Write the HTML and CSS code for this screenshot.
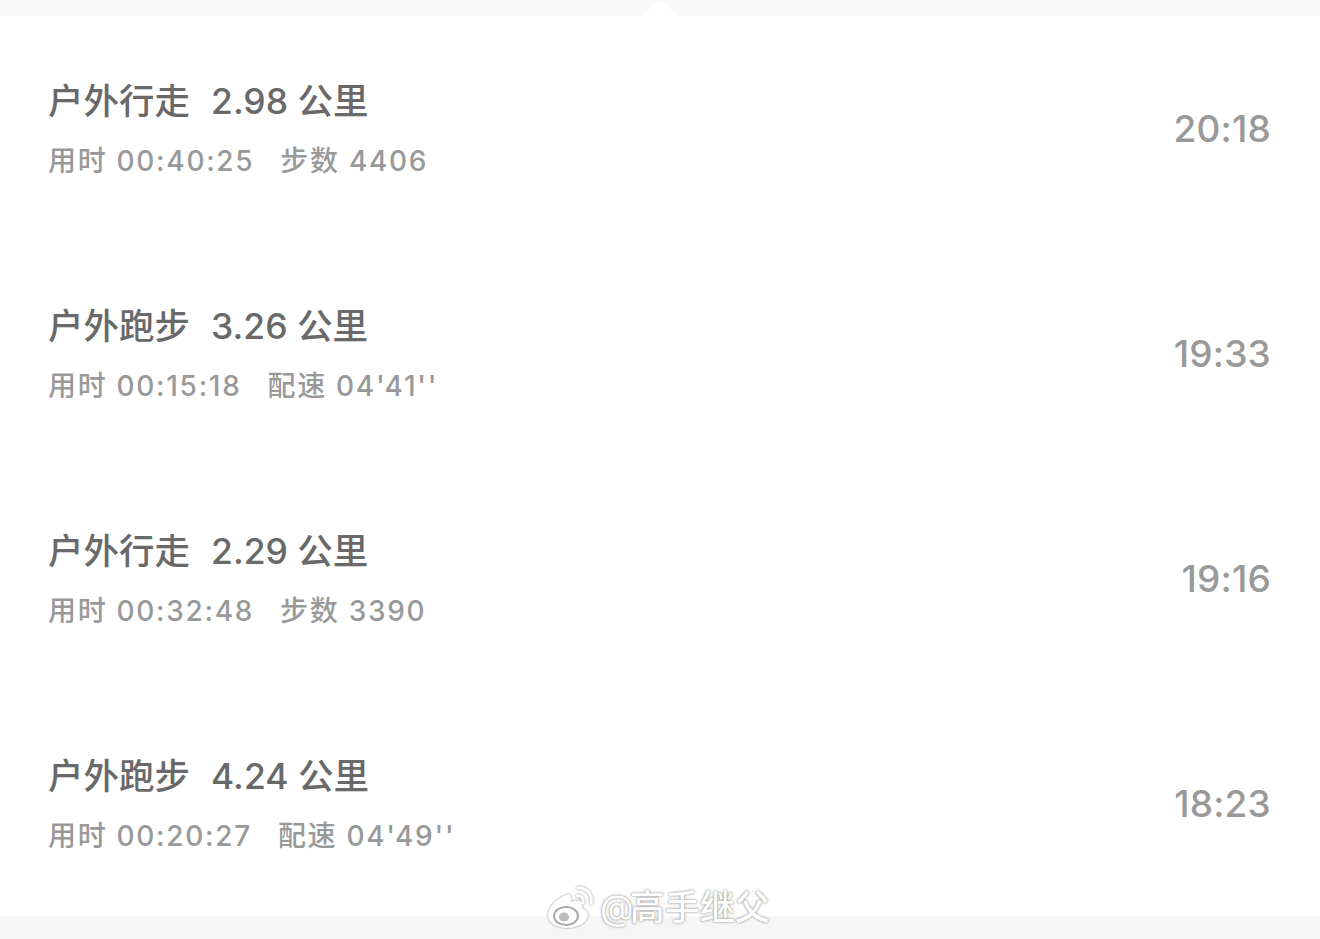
FILE: index.html
```html
<!DOCTYPE html>
<html lang="zh">
<head>
    <meta charset="utf-8">
    <title>运动记录</title>
    <link rel="stylesheet" href="styles.css">
</head>
<body>

<div class="top-bar"></div>

<ul class="records">
    <li class="record">
        <div>
            <div class="title"><span class="name">户外行走</span><span class="dist">2.98 公里</span></div>
            <div class="sub"><span class="used">用时 00:40:25</span><span>步数 4406</span></div>
        </div>
        <div class="time">20:18</div>
    </li>
    <li class="record">
        <div>
            <div class="title"><span class="name">户外跑步</span><span class="dist">3.26 公里</span></div>
            <div class="sub"><span class="used">用时 00:15:18</span><span>配速 04'41''</span></div>
        </div>
        <div class="time">19:33</div>
    </li>
    <li class="record">
        <div>
            <div class="title"><span class="name">户外行走</span><span class="dist">2.29 公里</span></div>
            <div class="sub"><span class="used">用时 00:32:48</span><span>步数 3390</span></div>
        </div>
        <div class="time">19:16</div>
    </li>
    <li class="record">
        <div>
            <div class="title"><span class="name">户外跑步</span><span class="dist">4.24 公里</span></div>
            <div class="sub"><span class="used">用时 00:20:27</span><span>配速 04'49''</span></div>
        </div>
        <div class="time">18:23</div>
    </li>
</ul>

<div class="bottom-bar"></div>

<div class="watermark">
    <svg class="weibo" width="50" height="44" viewBox="0 0 50 44">
        <path class="weibo-body" d="M20 10C11 13 2 22 2 30c0 8 9 13 19 13 12 0 21-7 21-13 0-5-5-6-6-7 1-3 1-6-2-7-3-1-7 0-9 1 1-4 0-6-1-7-1-1-2-1-4 0z"/>
        <ellipse class="weibo-eye" cx="20" cy="31" rx="12" ry="9"/>
        <ellipse class="weibo-pupil" cx="18" cy="32" rx="5" ry="4.5"/>
        <path class="weibo-wave" d="M31 11c4-1 7 2 6 7"/>
        <path class="weibo-wave" d="M32 3c8-1 15 6 13 15"/>
    </svg>
    <span class="mark-text"><span class="mark-at">@</span>高手继父</span>
</div>

</body>
</html>
```

FILE: styles.css
```css
* { box-sizing: border-box; }

html, body {
    margin: 0;
    height: 939px;
    overflow: hidden;
}

body {
    position: relative;
    background: #fff;
    font-family: Inter, "Noto Sans CJK SC", sans-serif;
    font-weight: 500;
}

.top-bar {
    position: relative;
    height: 16px;
    background: #f9f9f9;
}

/* little notch pointing up out of the list */
.top-bar::after {
    content: "";
    position: absolute;
    left: 642px;
    top: 0;
    border-left: 18px solid transparent;
    border-right: 18px solid transparent;
    border-bottom: 16px solid #fff;
}

.records {
    list-style: none;
    margin: 0;
    padding: 0;
}

.record {
    height: 225px;
    padding: 0 49px 0 48px;
    display: flex;
    justify-content: space-between;
    align-items: center;
}

.title {
    font-size: 35.5px;
    line-height: 44px;
    color: #696969;
    display: flex;
    margin-top: 4px;
}

.name { margin-right: 21px; }

.sub {
    font-size: 28px;
    letter-spacing: 1.7px;
    line-height: 40px;
    color: #999;
    margin-top: 17px;
    display: flex;
}

.used { margin-right: 26px; }

.time {
    font-size: 37px;
    letter-spacing: 0.2px;
    line-height: 44px;
    margin-top: 1px;
    color: #999;
}

.bottom-bar {
    height: 23px;
    background: #f6f6f6;
}

.watermark {
    position: absolute;
    left: 546px;
    top: 885px;
    display: flex;
    align-items: center;
    gap: 4px;
    color: #fff;
}

.weibo { filter: drop-shadow(0 0 1px #888); }
.weibo-body { fill: #fff; }
.weibo-eye { fill: #fff; stroke: #aaa; stroke-width: 2; }
.weibo-pupil { fill: #bbb; }
.weibo-wave { fill: none; stroke: #fff; stroke-width: 3; stroke-linecap: round; }

.mark-text {
    font-size: 35px;
    line-height: 44px;
    text-shadow: 0 0 3px #999, 0 0 1px #888;
}

.mark-at {
    font-weight: 400;
    letter-spacing: -4px;
}
```
